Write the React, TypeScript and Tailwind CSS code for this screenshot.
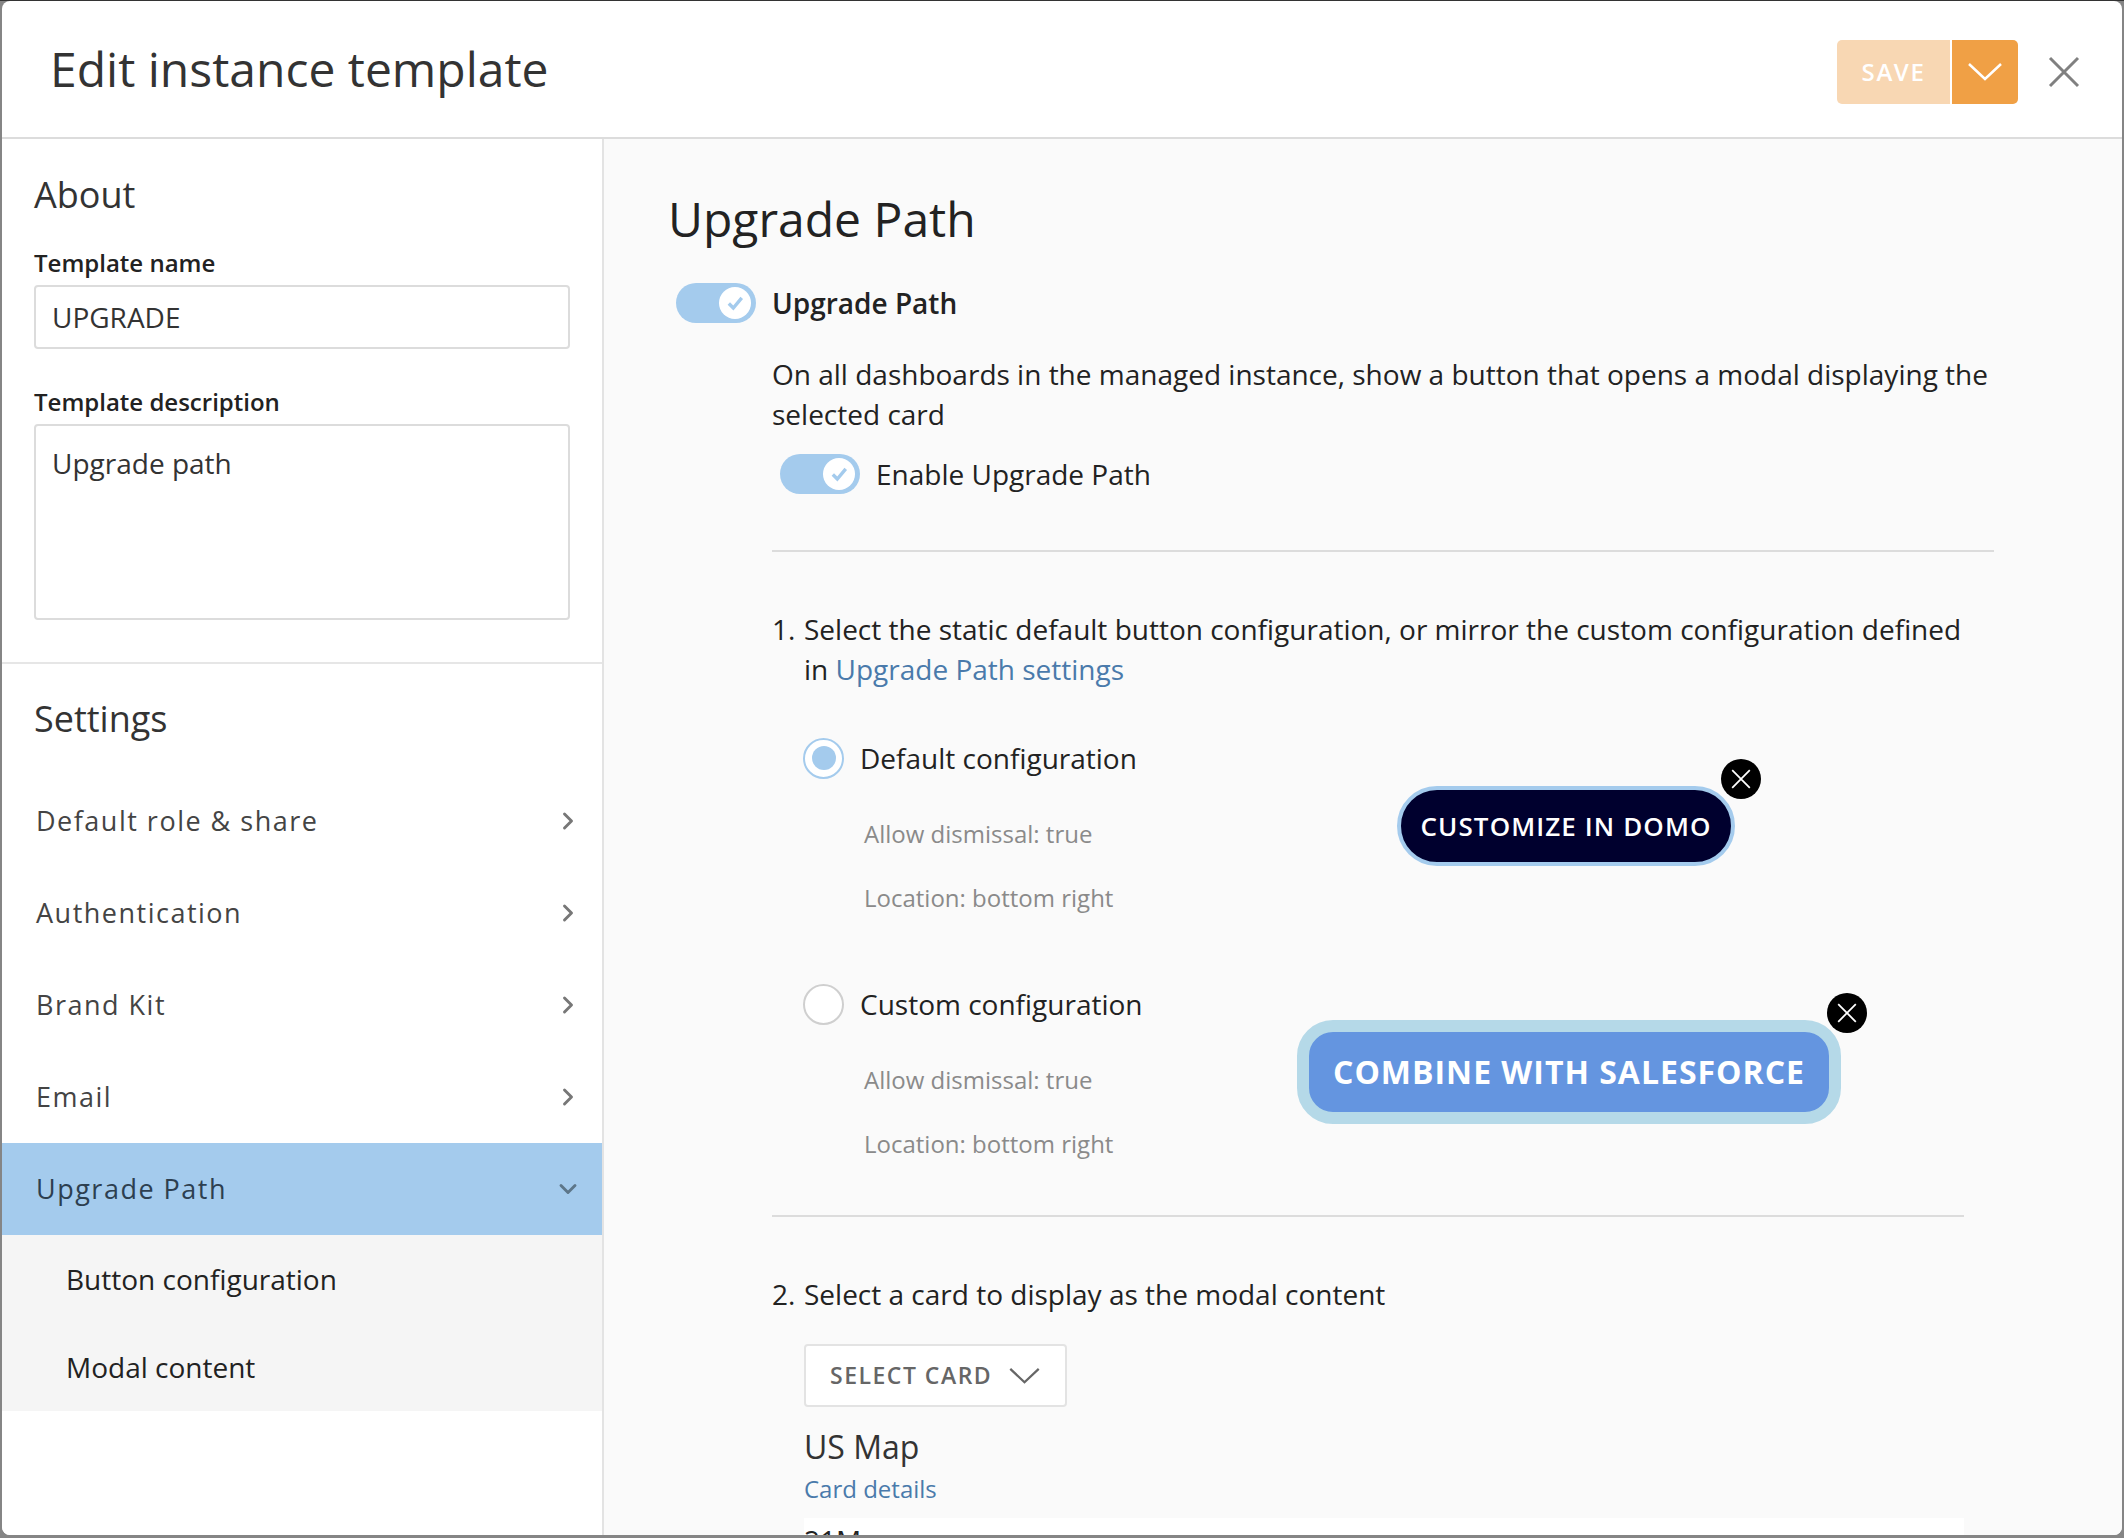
import { ChevronDown, ChevronRight } from "lucide-react";

const font = "font-['Open_Sans',sans-serif]";

function Toggle() {
  return (
    <div className="flex h-[40px] w-[80px] shrink-0 items-center justify-end rounded-full bg-[#a4cbed] pr-[5px]">
      <div className="flex h-[32px] w-[32px] items-center justify-center rounded-full bg-white">
        <svg viewBox="0 0 16 16" className="h-[18px] w-[18px]" fill="none" stroke="#a4cbed" strokeWidth="3">
          <path d="M2.5 8.5 L6.5 12.5 L14 3.5" />
        </svg>
      </div>
    </div>
  );
}

function CloseBadge({ className }: { className: string }) {
  return (
    <div className={`absolute flex h-[40px] w-[40px] items-center justify-center rounded-full bg-black ${className}`}>
      <svg viewBox="0 0 20 20" className="h-[22px] w-[22px]" stroke="white" strokeWidth="1.6">
        <path d="M2 2 L18 18 M18 2 L2 18" />
      </svg>
    </div>
  );
}

function MenuRow({ label }: { label: string }) {
  return (
    <div className="flex h-[92px] items-center justify-between pl-[34px] pr-[20px] text-[27px] tracking-[1.5px] text-[#444]">
      <span>{label}</span>
      <ChevronRight size={28} strokeWidth={2.5} className="text-[#777]" />
    </div>
  );
}

function ConfigDetails() {
  return (
    <div className="ml-[61px] text-[24px] leading-[32px] text-[#8a8a8a]">
      <div className="mt-[39px]">Allow dismissal: true</div>
      <div className="mt-[32px]">Location: bottom right</div>
    </div>
  );
}

export default function App() {
  return (
    <div className={`${font} flex h-[1538px] w-[2124px] flex-col overflow-hidden border-t border-[#333] bg-[#858585] pb-[3px] pl-[2px] pr-[2px]`}>
      <div className="flex min-h-0 flex-1 flex-col overflow-hidden rounded-[8px] bg-white">
        <header className="flex h-[138px] shrink-0 items-center justify-between border-b-2 border-[#dcdcdc] pl-[48px] pr-[42px]">
          <h1 className="text-[48px] leading-none text-[#333]">Edit instance template</h1>
          <div className="mt-[6px] flex items-center">
            <div className="flex h-[64px] w-[113px] items-center justify-center rounded-l-[5px] bg-[#f8d7b3] text-[24px] font-semibold tracking-[1.6px] text-white">
              SAVE
            </div>
            <div className="ml-[2px] flex h-[64px] w-[66px] items-center justify-center rounded-r-[5px] bg-[#f0a045]">
              <svg viewBox="0 0 34 18" className="h-[18px] w-[34px]" fill="none" stroke="white" strokeWidth="2.5">
                <path d="M1 1 L17 16 L33 1" />
              </svg>
            </div>
            <svg viewBox="0 0 32 32" className="ml-[30px] h-[32px] w-[32px]" stroke="#808080" strokeWidth="3">
              <path d="M2 2 L30 30 M30 2 L2 30" />
            </svg>
          </div>
        </header>
        <div className="flex min-h-0 flex-1">
          <aside className="w-[602px] shrink-0 border-r-2 border-[#e3e3e3] bg-white">
            <div className="border-b-2 border-[#e6e6e6] px-[32px] pb-[42px] pt-[32px]">
              <h2 className="text-[36px] leading-[48px] text-[#333]">About</h2>
              <div className="mt-[28px] text-[24px] font-semibold leading-[32px] text-[#222]">Template name</div>
              <div className="mt-[6px] flex h-[64px] w-[536px] items-center rounded-[4px] border-2 border-[#dcdcdc] pl-[16px] text-[28px] text-[#333]">
                UPGRADE
              </div>
              <div className="mt-[37px] text-[24px] font-semibold leading-[32px] text-[#222]">Template description</div>
              <div className="mt-[6px] h-[196px] w-[536px] rounded-[4px] border-2 border-[#dcdcdc] pl-[16px] pt-[19px] text-[28px] leading-[36px] text-[#333]">
                Upgrade path
              </div>
            </div>
            <h2 className="pl-[32px] pt-[31px] text-[36px] leading-[48px] text-[#333]">Settings</h2>
            <div className="mt-[32px]">
              <MenuRow label="Default role & share" />
              <MenuRow label="Authentication" />
              <MenuRow label="Brand Kit" />
              <MenuRow label="Email" />
              <div className="flex h-[92px] items-center justify-between bg-[#a4cbed] pl-[34px] pr-[20px] text-[27px] tracking-[1.5px] text-[#2d3f50]">
                <span>Upgrade Path</span>
                <ChevronDown size={28} strokeWidth={2.5} className="text-[#5d7689]" />
              </div>
              <div className="flex h-[176px] flex-col bg-[#f5f5f5] pl-[64px] text-[28px] text-[#222]">
                <div className="flex h-[88px] items-center">Button configuration</div>
                <div className="flex h-[88px] items-center">Modal content</div>
              </div>
            </div>
          </aside>
          <main className="min-w-0 flex-1 overflow-hidden bg-[#fafafa] pl-[65px] text-[28px] text-[#222]">
            <h1 className="-ml-[1px] pt-[50px] text-[48px] leading-[60px] text-[#222]">Upgrade Path</h1>
            <div className="mt-[33px] ml-[7px] flex items-center gap-[16px]">
              <Toggle />
              <span className="font-semibold">Upgrade Path</span>
            </div>
            <div className="ml-[103px] w-[1222px]">
              <p className="mt-[30px] leading-[40px]">
                On all dashboards in the managed instance, show a button that opens a modal displaying the selected card
              </p>
              <div className="mt-[19px] ml-[8px] flex items-center gap-[16px]">
                <Toggle />
                <span>Enable Upgrade Path</span>
              </div>
              <div className="mt-[55px] h-[2px] bg-[#dcdcdc]" />
              <div className="mt-[57px] flex leading-[40px]">
                <span className="w-[32px] shrink-0">1.</span>
                <p className="w-[1170px]">
                  Select the static default button configuration, or mirror the custom configuration defined in{" "}
                  <span className="text-[#4a7aab]">Upgrade Path settings</span>
                </p>
              </div>
              <div className="mt-[48px] ml-[31px] flex h-[212px]">
                <div className="w-[480px]">
                  <div className="flex items-center gap-[16px]">
                    <div className="flex h-[41px] w-[41px] items-center justify-center rounded-full border-2 border-[#a4cbed] bg-white">
                      <div className="h-[24px] w-[24px] rounded-full bg-[#a4cbed]" />
                    </div>
                    <span>Default configuration</span>
                  </div>
                  <ConfigDetails />
                </div>
                <div className="relative mt-[49px] ml-[114px] flex h-[80px] w-[338px] items-center justify-center self-start rounded-full border-[4px] border-[#a4cbed] bg-[#00002e] text-[26px] font-semibold tracking-[1.1px] text-white">
                  CUSTOMIZE IN DOMO
                  <CloseBadge className="-right-[30px] -top-[31px]" />
                </div>
              </div>
              <div className="mt-[34px] ml-[31px] flex h-[164px]">
                <div className="w-[480px]">
                  <div className="flex items-center gap-[16px]">
                    <div className="h-[41px] w-[41px] rounded-full border-2 border-[#cfcfcf] bg-white" />
                    <span>Custom configuration</span>
                  </div>
                  <ConfigDetails />
                </div>
                <div className="relative mt-[37px] ml-[14px] flex h-[104px] w-[544px] items-center justify-center self-start rounded-[36px] border-[12px] border-[#b5d9e8] bg-[#6495e0] text-[32px] font-bold tracking-[1px] text-white">
                  COMBINE WITH SALESFORCE
                  <CloseBadge className="-right-[38px] -top-[39px]" />
                </div>
              </div>
              <div className="mt-[68px] h-[2px] w-[1192px] bg-[#dcdcdc]" />
              <div className="mt-[57px] flex leading-[40px]">
                <span className="w-[32px] shrink-0">2.</span>
                <p>Select a card to display as the modal content</p>
              </div>
              <div className="ml-[32px]">
                <div className="mt-[30px] flex h-[63px] w-[263px] items-center gap-[16px] rounded-[4px] border-2 border-[#e3e3e3] bg-white pl-[24px] text-[23px] font-semibold tracking-[1.5px] text-[#666]">
                  SELECT CARD
                  <svg viewBox="0 0 34 18" className="h-[16px] w-[33px]" fill="none" stroke="#666" strokeWidth="2.5">
                    <path d="M1 1 L17 16 L33 1" />
                  </svg>
                </div>
                <div className="mt-[20px] text-[32px] leading-[40px] text-[#333]">US Map</div>
                <div className="mt-[6px] text-[24px] leading-[32px] text-[#4a7aab]">Card details</div>
                <div className="mt-[13px] h-[40px] w-[1160px] bg-white pt-[2px] text-[28px] leading-[40px] text-[#222]">
                  21M
                </div>
              </div>
            </div>
          </main>
        </div>
      </div>
    </div>
  );
}
